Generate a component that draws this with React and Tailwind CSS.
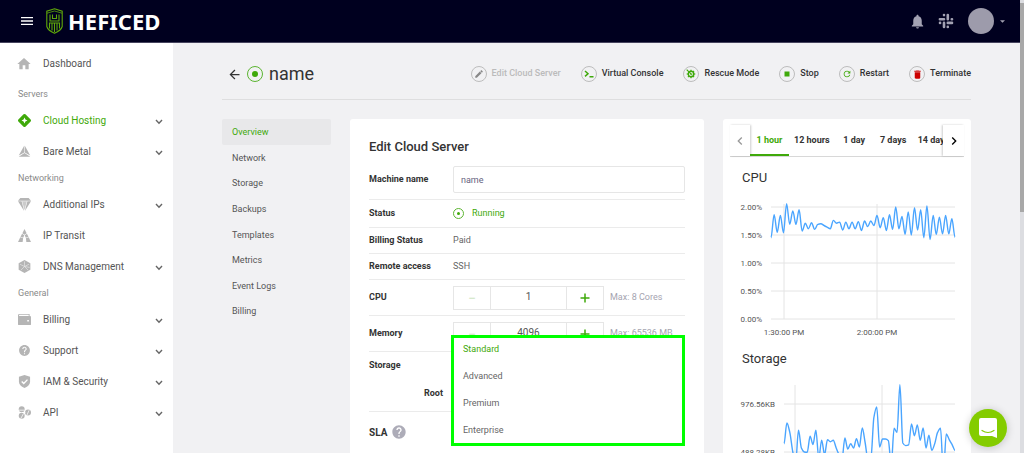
import { useState } from "react";
import {
    MdArrowBack,
    MdChevronLeft,
    MdChevronRight,
    MdDelete,
    MdEdit,
    MdHelp,
    MdHome,
    MdMenu,
    MdNotifications,
    MdRefresh,
    MdStop,
} from "react-icons/md";

const sidebarGroups = [
    {
        items: [{ label: "Dashboard", icon: "home" }],
    },
    {
        title: "Servers",
        items: [
            { label: "Cloud Hosting", icon: "cloud", open: true, active: true },
            { label: "Bare Metal", icon: "metal", open: true },
        ],
    },
    {
        title: "Networking",
        items: [
            { label: "Additional IPs", icon: "ips", open: true },
            { label: "IP Transit", icon: "transit" },
            { label: "DNS Management", icon: "dns", open: true },
        ],
    },
    {
        title: "General",
        items: [
            { label: "Billing", icon: "billing", open: true },
            { label: "Support", icon: "support", open: true },
            { label: "IAM & Security", icon: "security", open: true },
            { label: "API", icon: "api", open: true },
        ],
    },
];

const sections = [
    "Overview",
    "Network",
    "Storage",
    "Backups",
    "Templates",
    "Metrics",
    "Event Logs",
    "Billing",
];

const plans = ["Standard", "Advanced", "Premium", "Enterprise"];
const ranges = ["1 hour", "12 hours", "1 day", "7 days", "14 days"];

// One sample per minute
const cpuSamples = [
    1.45, 1.86, 1.55, 1.85, 1.54, 2.06, 1.69, 1.93, 1.69, 1.95, 1.57, 1.71,
    1.61, 1.72, 1.6, 1.69, 1.7, 1.67, 1.64, 1.61, 1.76, 1.71, 1.73, 1.59, 1.73,
    1.61, 1.73, 1.61, 1.74, 1.58, 1.75, 1.65, 1.75, 1.67, 1.85, 1.63, 1.81,
    1.58, 1.86, 1.6, 2.0, 1.61, 1.83, 1.51, 1.91, 1.5, 1.99, 1.59, 1.95, 1.45,
    2.02, 1.42, 1.85, 1.51, 1.82, 1.52, 1.85, 1.52, 1.79, 1.46,
];

const storageSamples = [
    573, 783, 688, 495, 376, 709, 529, 488, 485, 648, 563, 709, 427, 607, 461,
    614, 593, 607, 529, 461, 410, 631, 519, 573, 529, 624, 539, 732, 580, 410,
    427, 834, 946, 539, 620, 620, 604, 360, 729, 688, 1173, 580, 553, 560, 773,
    654, 763, 607, 732, 529, 658, 505, 573, 688, 729, 275, 671, 614, 563, 505,
];

// Monotone cubic curve through evenly spaced points
function linePath(values, x0, x1, toY) {
    const step = (x1 - x0) / (values.length - 1);
    const ys = values.map(toY);
    const slopes = ys.map((y, i) => {
        if (i === 0 || i === ys.length - 1) return 0;
        const before = y - ys[i - 1];
        const after = ys[i + 1] - y;
        if (before * after <= 0) return 0;
        return (2 * before * after) / (before + after);
    });

    let d = `M${x0} ${ys[0].toFixed(1)}`;
    for (let i = 1; i < ys.length; i++) {
        const x = x0 + i * step;
        const c1 = ys[i - 1] + slopes[i - 1] / 3;
        const c2 = ys[i] - slopes[i] / 3;
        d += `C${(x - (step * 2) / 3).toFixed(1)} ${c1.toFixed(1)} ${(x - step / 3).toFixed(1)} ${c2.toFixed(1)} ${x.toFixed(1)} ${ys[i].toFixed(1)}`;
    }
    return d;
}

function SidebarIcon({ name }) {
    if (name === "home") return <MdHome className="size-4" />;
    if (name === "support") return <MdHelp className="size-[13px]" />;

    return (
        <svg viewBox="0 0 14 14" className="size-[13px]" fill="currentColor">
            {name === "cloud" && (
                <path
                    fillRule="evenodd"
                    d="M7 0Q7.600 0 8 .4L13.600 6Q14.400 7 13.600 8L8 13.600Q7 14.400 6 13.600L.4 8Q-.4 7 .4 6L6 .4Q6.400 0 7 0ZM7 3.800 6 6 3.800 7 6 8 7 10.200 8 8 10.200 7 8 6Z"
                />
            )}
            {name === "metal" && (
                <>
                    <path d="M6.700.8V8L.8 11.400Z" />
                    <path d="M7.300.8V8L13.200 11.400Z" />
                    <path d="M7 8.700 13.200 12.600H.8Z" />
                </>
            )}
            {name === "ips" && (
                <>
                    <path d="M2.500 0H11.500L14 3H0Z" />
                    <path d="M0 3.500H3.900L6.600 14Z" />
                    <path d="M4.400 3.500H9.600L7 13Z" opacity=".7" />
                    <path d="M14 3.500H10.100L7.400 14Z" />
                </>
            )}
            {name === "transit" && (
                <>
                    <path d="M7 0 9.300 4.600 7 6.200 4.700 4.600Z" />
                    <path d="M4.400 5.100 6.700 6.700 5.600 9.500 2.700 8.400Z" />
                    <path d="M9.600 5.100 7.300 6.700 8.400 9.500 11.300 8.400Z" />
                    <path d="M2.500 8.900 5.500 10 5 14H0Z" />
                    <path d="M11.500 8.900 8.500 10 9 14H14Z" />
                </>
            )}
            {name === "dns" && (
                <>
                    <path d="M7 0 13.300 3.500V10.500L7 14 .7 10.500V3.500Z" />
                    <path
                        d="M7 7V1.500M7 7 2 4.500M7 7 12 4.500M7 7 3 11M7 7 11 11M7 7 12.500 8"
                        stroke="white"
                        strokeWidth=".7"
                        opacity=".7"
                    />
                </>
            )}
            {name === "billing" && (
                <path
                    fillRule="evenodd"
                    d="M1.500 1H12.500V3.300H13Q14 3.300 14 4.300V12Q14 13 13 13H1Q0 13 0 12V2.500Q0 1 1.500 1ZM1.800 2Q1.100 2 1.100 2.700T1.800 3.300H11.500V2ZM10 7.500V9.200H11.700V7.500Z"
                />
            )}
            {name === "security" && (
                <>
                    <path d="M7 0 13 2V7Q13 11.500 7 14 1 11.500 1 7V2Z" />
                    <path
                        d="M4 7 6.200 9.200 10.200 5"
                        fill="none"
                        stroke="white"
                        strokeWidth="1.500"
                    />
                </>
            )}
            {name === "api" && (
                <>
                    <circle cx="4" cy="3.400" r="3.200" />
                    <circle cx="4" cy="10.600" r="3.200" />
                    <circle cx="10.800" cy="7" r="3.200" />
                    <path
                        d="M.5 4.500H7.500M3 13.500 6 8M9.500 10 12 4.500M4 7H8"
                        stroke="white"
                        strokeWidth=".8"
                    />
                </>
            )}
        </svg>
    );
}

function ChevronDown() {
    return (
        <svg viewBox="0 0 8 6" className="h-[6px] w-2 text-[#666]">
            <path
                d="M1 1 4 4.200 7 1"
                fill="none"
                stroke="currentColor"
                strokeWidth="1.400"
            />
        </svg>
    );
}

function Header() {
    return (
        <header className="flex h-[43px] shrink-0 items-center border-b border-[#46445e] bg-[#00001f] pr-[15px] pl-[19px]">
            <button aria-label="Menu" className="text-white">
                <MdMenu className="size-4" />
            </button>
            <a href="#" className="ml-[11px] flex items-center gap-[5px]">
                <svg
                    viewBox="0 0 17 26"
                    className="h-[26px] w-[17px]"
                    fill="none"
                    stroke="#5fa80a"
                    strokeWidth="1.100"
                >
                    <path d="M8.500.8 16.200 3.200V18.500Q15 22.500 8.500 25.200 2 22.500.8 18.500V3.200Z" />
                    <path d="M1 5.200 8.500 3 16 5.200" strokeWidth=".8" />
                    <path d="M4 6.500V13H13V6.500M6.500 6.500V10.500H10.500V6.500" />
                    <path d="M3.500 20.500V15H13.500V20.500M6 22.500V15M8.500 24V15M11 22.500V15" />
                </svg>
                <span className="font-['Noto_Sans'] text-[22px] leading-6 font-bold text-white">
                    HEFICED
                </span>
            </a>
            <div className="ml-auto flex items-center text-[#a3a2b3]">
                <button aria-label="Notifications">
                    <MdNotifications className="size-[17px]" />
                </button>
                <button aria-label="Slack" className="ml-3">
                    <svg
                        viewBox="0 0 16 16"
                        className="size-4"
                        fill="none"
                        stroke="currentColor"
                        strokeWidth="2.600"
                        strokeLinecap="round"
                    >
                        <path d="M6 2V2.100M6 6.200H1.900M9.800 6.200V2M13.800 6.200H14M9.800 9.900H14M9.800 13.900V14M6 9.900V14M2 9.900H2.100" />
                    </svg>
                </button>
                <button
                    aria-label="Account"
                    className="ml-[14px] flex items-center gap-[6px]"
                >
                    <span className="size-[26px] rounded-full bg-[#9d9bab]" />
                    <svg viewBox="0 0 6 3" className="h-[3px] w-[5px]">
                        <path d="M0 0H6L3 3Z" fill="currentColor" />
                    </svg>
                </button>
            </div>
        </header>
    );
}

function Sidebar() {
    return (
        <aside className="w-[173px] shrink-0 bg-white pt-[5px]">
            {sidebarGroups.map((group) => (
                <nav key={group.title || "top"} className="first:mb-1">
                    {group.title && (
                        <h2 className="flex h-[22px] items-center pt-px pl-[18px] text-[9px] text-[#8a8a8a]">
                            {group.title}
                        </h2>
                    )}
                    {group.items.map((item) => (
                        <a
                            key={item.label}
                            href="#"
                            className={`flex h-[31px] items-center pr-[10px] pl-[16px] ${
                                item.active ? "text-[#3fa90a]" : "text-[#555]"
                            }`}
                        >
                            <span
                                className={`flex w-4 justify-center ${
                                    item.active ? "" : "text-[#b5b5b5]"
                                }`}
                            >
                                <SidebarIcon name={item.icon} />
                            </span>
                            <span className="ml-[11px] flex-1">
                                {item.label}
                            </span>
                            {item.open && (
                                <span className="pt-[3px]">
                                    <ChevronDown />
                                </span>
                            )}
                        </a>
                    ))}
                </nav>
            ))}
        </aside>
    );
}

function Action({ label, disabled, children }) {
    return (
        <button
            disabled={disabled}
            className="flex items-center gap-[5px] font-medium text-[#333] disabled:text-[#bbb]"
        >
            <span className="flex size-4 items-center justify-center rounded-full border border-[#bdbdbd] text-[#3fa90a]">
                {children}
            </span>
            {label}
        </button>
    );
}

function TitleBar() {
    return (
        <div className="flex h-[57px] items-center border-b border-[#dededf] pt-[6px] text-[9px]">
            <a href="#" aria-label="Back" className="ml-[5px] text-[#333]">
                <MdArrowBack className="size-[15px]" />
            </a>
            <span className="ml-[5px] flex size-4 items-center justify-center rounded-full border border-[#5cb531]">
                <span className="size-[6px] rounded-full bg-[#3fa90a]" />
            </span>
            <h1 className="ml-[6px] text-[18px] leading-6 text-[#333]">name</h1>
            <div className="ml-auto flex gap-5">
                <Action label="Edit Cloud Server" disabled>
                    <MdEdit className="size-[10px] text-[#888]" />
                </Action>
                <Action label="Virtual Console">
                    <svg
                        viewBox="0 0 10 8"
                        className="h-2 w-[10px]"
                        fill="none"
                        stroke="currentColor"
                        strokeWidth="1.500"
                    >
                        <path d="M1 1 4 3.700 1 6.400M5.500 6.700H9.500" />
                    </svg>
                </Action>
                <Action label="Rescue Mode">
                    <svg
                        viewBox="0 0 12 12"
                        className="size-[10px]"
                        fill="none"
                        stroke="currentColor"
                    >
                        <circle cx="6" cy="6" r="3.300" strokeWidth="1.800" />
                        <path
                            d="M6 .8V2.500M6 9.500V11.200M.8 6H2.500M9.500 6H11.200M9.700 2.300 8.500 3.500M2.300 9.700 3.500 8.500M9.700 9.700 8.500 8.500M.8 .8 6 6H7.500M6 6V7.500"
                            strokeWidth="1.400"
                        />
                    </svg>
                </Action>
                <Action label="Stop">
                    <MdStop className="size-[10px]" />
                </Action>
                <Action label="Restart">
                    <MdRefresh className="size-[10px]" />
                </Action>
                <Action label="Terminate">
                    <MdDelete className="size-[11px] text-[#cc0000]" />
                </Action>
            </div>
        </div>
    );
}

function Stepper({ id, value, max, onChange, step }) {
    return (
        <div className="flex items-center gap-[6px]">
            <div className="flex h-6 w-[151px] border border-[#e6e6e6]">
                <button
                    aria-label="Decrease"
                    className="w-9 text-[14px] leading-5 text-[#cfe5c4]"
                    onClick={() => onChange(Math.max(step, value - step))}
                >
                    −
                </button>
                <input
                    id={id}
                    value={value}
                    onChange={(e) => onChange(Number(e.target.value) || step)}
                    className="w-0 flex-1 border-x border-[#e6e6e6] pb-[2px] text-center text-[10px] text-[#555] outline-none"
                />
                <button
                    aria-label="Increase"
                    className="flex w-9 items-center justify-center text-[#3fa90a]"
                    onClick={() => onChange(value + step)}
                >
                    <svg viewBox="0 0 10 10" className="size-[10px]">
                        <path
                            d="M5 .5V9.500M.5 5H9.500"
                            stroke="currentColor"
                            strokeWidth="1.500"
                        />
                    </svg>
                </button>
            </div>
            <span className="text-[#a5a4b0]">{max}</span>
        </div>
    );
}

function Row({ label, htmlFor, className, children }) {
    return (
        <div className={`flex items-center border-b border-[#ebebeb] ${className}`}>
            <label
                htmlFor={htmlFor}
                className="w-[84px] shrink-0 font-bold text-[#333]"
            >
                {label}
            </label>
            {children}
        </div>
    );
}

function EditServer() {
    const [name, setName] = useState("name");
    const [cpu, setCpu] = useState(1);
    const [memory, setMemory] = useState(4096);
    const [plan, setPlan] = useState("Standard");

    return (
        <section className="rounded-[3px] bg-white px-[19px] pt-4 pb-5 text-[9px] text-[#666]">
            <h2 className="mb-px text-[13px] leading-6 font-medium text-[#333]">
                Edit Cloud Server
            </h2>
            <Row label="Machine name" htmlFor="machine" className="h-10">
                <input
                    id="machine"
                    value={name}
                    onChange={(e) => setName(e.target.value)}
                    className="h-[27px] min-w-0 flex-1 rounded-[2px] border border-[#e6e6e6] px-[7px] pt-px text-[#666380] outline-none"
                />
            </Row>
            <Row label="Status" className="h-7">
                <span className="flex size-[11px] items-center justify-center rounded-full border border-[#5cb531]">
                    <span className="size-[3px] rounded-full bg-[#3fa90a]" />
                </span>
                <span className="ml-2 text-[#3fa90a]">Running</span>
            </Row>
            <Row label="Billing Status" className="h-[26px]">
                Paid
            </Row>
            <Row label="Remote access" className="h-[26px]">
                SSH
            </Row>
            <Row label="CPU" htmlFor="cpu" className="h-9">
                <Stepper
                    id="cpu"
                    value={cpu}
                    step={1}
                    max="Max: 8 Cores"
                    onChange={setCpu}
                />
            </Row>
            <Row label="Memory" htmlFor="memory" className="h-9">
                <Stepper
                    id="memory"
                    value={memory}
                    step={1024}
                    max="Max: 65536 MB"
                    onChange={setMemory}
                />
            </Row>

            <div className="relative h-[60px] border-b border-[#ebebeb] font-bold text-[#333]">
                <p className="pt-[7px] leading-3">Storage</p>
                <p className="w-[74px] pt-4 text-right leading-3">Root</p>

                {/* Open plan menu, lies over the rows below */}
                <div
                    role="listbox"
                    aria-label="SLA"
                    className="absolute -top-[17px] right-0 left-[82px] z-10 h-[111px] border-3 border-[#00ff00] bg-white font-normal text-[#666]"
                >
                    {plans.map((item) => (
                        <button
                            key={item}
                            role="option"
                            aria-selected={item === plan}
                            onClick={() => setPlan(item)}
                            className="block h-[27px] w-full px-[9px] pb-1 text-left aria-selected:text-[#3fa90a]"
                        >
                            {item}
                        </button>
                    ))}
                </div>
            </div>
            <div className="flex h-10 items-center gap-1 text-[10px] font-bold text-[#333]">
                SLA
                <MdHelp className="size-4 text-[#adacb8]" />
            </div>
        </section>
    );
}

function CpuChart() {
    const toY = (value) => 124 - value * 56;
    return (
        <svg viewBox="0 0 248 150" className="w-full">
            <path
                d="M48 12H232M48 40H232M48 68H232M48 96H232M48 124H232M61 9V124M154 9V124"
                stroke="#e4e4e4"
            />
            <g fill="#555" fontSize="8" textAnchor="end">
                {["2.00%", "1.50%", "1.00%", "0.50%", "0.00%"].map((label, i) => (
                    <text key={label} x="39" y={15 + i * 28}>
                        {label}
                    </text>
                ))}
            </g>
            <g fill="#555" fontSize="8" textAnchor="middle">
                <text x="61" y="140">
                    1:30:00 PM
                </text>
                <text x="154" y="140">
                    2:00:00 PM
                </text>
            </g>
            <path
                d={linePath(cpuSamples, 48, 232, toY)}
                fill="none"
                stroke="#4aa5ff"
                strokeWidth="1.400"
            />
        </svg>
    );
}

function StorageChart() {
    const toY = (value) => 123 - value / 10.17;
    return (
        <svg viewBox="0 0 248 130" className="w-full">
            <path
                d="M61 27H232M61 75H232M61 123H232M72 8V123M159 8V123"
                stroke="#e4e4e4"
            />
            <g fill="#555" fontSize="8" textAnchor="end">
                <text x="52" y="30">
                    976.56KB
                </text>
                <text x="52" y="78">
                    488.28KB
                </text>
            </g>
            <path
                d={linePath(storageSamples, 61, 232, toY)}
                fill="none"
                stroke="#4aa5ff"
                strokeWidth="1.400"
            />
        </svg>
    );
}

function Metrics() {
    const [range, setRange] = useState("1 hour");

    return (
        <section className="rounded-[3px] bg-white pt-[6px] text-[#333]">
            <div className="mx-[7px] flex h-8 border-b border-[#d8d8d8]">
                <button
                    aria-label="Previous"
                    className="flex w-5 shrink-0 items-center justify-center text-[#999] shadow-[1px_0_2px_rgba(0,0,0,0.2)]"
                >
                    <MdChevronLeft className="size-4" />
                </button>
                <div role="tablist" className="flex min-w-0 flex-1 overflow-hidden">
                    {ranges.map((item) => (
                        <button
                            key={item}
                            role="tab"
                            aria-selected={item === range}
                            onClick={() => setRange(item)}
                            className="min-w-[39px] shrink-0 border-b-2 border-transparent px-[5px] pt-[2px] text-[9px] font-bold aria-selected:border-[#3fa90a] aria-selected:text-[#3fa90a]"
                        >
                            {item}
                        </button>
                    ))}
                </div>
                <button
                    aria-label="Next"
                    className="flex w-[21px] shrink-0 items-center justify-center bg-white text-black shadow-[-1px_0_2px_rgba(0,0,0,0.2)]"
                >
                    <MdChevronRight className="size-4" />
                </button>
            </div>
            <h2 className="mt-[9px] pl-[19px] text-[13px] leading-6">CPU</h2>
            <div className="mt-[5px]">
                <CpuChart />
            </div>
            <h2 className="mt-[2px] pl-[19px] text-[13px] leading-6">Storage</h2>
            <div className="mt-[6px]">
                <StorageChart />
            </div>
        </section>
    );
}

export default function App() {
    return (
        <div className="flex h-screen overflow-hidden bg-[#f1f1f3] font-[Roboto,sans-serif] text-[10px]">
            <div className="flex min-w-0 flex-1 flex-col">
                <Header />
                <div className="flex min-h-0 flex-1">
                    <Sidebar />
                    <main className="min-w-0 flex-1 px-[49px]">
                        <TitleBar />
                        <div className="mt-[19px] grid grid-cols-[109px_1fr_248px] items-start gap-[19px]">
                            <nav className="grid h-[205px] grid-rows-8 text-[9px] text-[#555]">
                                {sections.map((item) => (
                                    <a
                                        key={item}
                                        href="#"
                                        className="flex items-center rounded-[2px] px-[10px] pt-[2px] first:bg-[#e8e8ea] first:text-[#3fa90a]"
                                    >
                                        {item}
                                    </a>
                                ))}
                            </nav>
                            <EditServer />
                            <Metrics />
                        </div>
                    </main>
                </div>
            </div>

            {/* Scroll track */}
            <div className="w-1 shrink-0 bg-[#dcdde1] pt-[3px]">
                <div className="h-[209px] bg-[#a8a8a8]" />
            </div>

            {/* Chat launcher */}
            <button
                aria-label="Open chat"
                className="fixed right-[17px] bottom-[6px] z-20 flex size-[38px] items-center justify-center rounded-full bg-[#84cc00] shadow-[0_1px_8px_rgba(0,0,0,0.2)]"
            >
                <svg viewBox="0 0 18 20" className="h-5 w-[18px]">
                    <path
                        d="M2 0H16Q18 0 18 2V20L13 18H2Q0 18 0 16V2Q0 0 2 0Z"
                        fill="white"
                    />
                    <path
                        d="M3 12.500Q9 16.500 15 12.500"
                        fill="none"
                        stroke="#84cc00"
                        strokeWidth="1.200"
                        strokeLinecap="round"
                    />
                </svg>
            </button>
        </div>
    );
}
